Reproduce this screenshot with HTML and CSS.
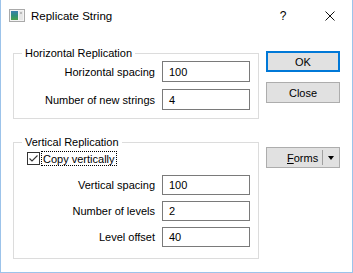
FILE: index.html
```html
<!DOCTYPE html>
<html>
<head>
<meta charset="utf-8">
<link rel="stylesheet" href="styles.css">
</head>
<body>
<div class="window">
  <div class="titlebar">
    <svg class="appicon" width="16" height="13" viewBox="0 0 16 13">
      <defs>
        <linearGradient id="pane" x1="0" y1="0" x2="0" y2="1">
          <stop offset="0" stop-color="#3a7fb0"/>
          <stop offset="0.5" stop-color="#2f8f7a"/>
          <stop offset="1" stop-color="#4aa04a"/>
        </linearGradient>
      </defs>
      <rect x="0.5" y="0.5" width="15" height="12" fill="#f4f4f4" stroke="#a9a9a9"/>
      <rect x="2" y="2" width="7" height="9" fill="url(#pane)"/>
      <rect x="10" y="2" width="4" height="9" fill="#e6e6e6"/>
      <rect x="11" y="3" width="2" height="2" fill="#b9b9b9"/>
    </svg>
    <span class="title">Replicate String</span>
    <span class="caption help">?</span>
    <span class="caption close">
      <svg width="10" height="10" viewBox="0 0 10 10"><path d="M0.5 0.5 L9.5 9.5 M9.5 0.5 L0.5 9.5" stroke="#111" stroke-width="1"/></svg>
    </span>
  </div>
  <div class="body">
    <div class="groups">
      <fieldset class="group group-h">
        <legend>Horizontal Replication</legend>
        <div class="rows rows-h">
          <span class="label">Horizontal spacing</span><span class="input">100</span>
          <span class="label">Number of new strings</span><span class="input">4</span>
        </div>
      </fieldset>
      <fieldset class="group group-v">
        <legend>Vertical Replication</legend>
        <div class="check-row">
          <svg class="checkbox" width="13" height="13" viewBox="0 0 13 13">
            <rect x="0.5" y="0.5" width="12" height="12" fill="#fff" stroke="#333"/>
            <path d="M2.5 6.5 L5 9 L10.5 3.5" fill="none" stroke="#333" stroke-width="1.1"/>
          </svg>
          <span class="check-label">Copy vertically</span>
        </div>
        <div class="rows rows-v">
          <span class="label">Vertical spacing</span><span class="input">100</span>
          <span class="label">Number of levels</span><span class="input">2</span>
          <span class="label">Level offset</span><span class="input">40</span>
        </div>
      </fieldset>
    </div>
    <div class="buttons">
      <div class="btn btn-default">OK</div>
      <div class="btn btn-close">Close</div>
      <div class="btn split">
        <span class="split-text"><u>F</u>orms</span>
        <span class="split-sep"></span>
        <span class="split-arrow"></span>
      </div>
    </div>
  </div>
</div>
</body>
</html>
```
FILE: styles.css
```css
* { box-sizing: border-box; }
html, body { margin: 0; padding: 0; background: #fff; }
body {
  font-family: "Liberation Sans", Arial, sans-serif;
  font-size: 11px;
  color: #000;
}
.window {
  width: 353px;
  height: 273px;
  background: #fff;
  border: 1px solid #9cc3ea;
  border-top: none;
  display: flex;
  flex-direction: column;
}
.titlebar {
  height: 31px;
  display: flex;
  align-items: center;
  padding-left: 8px;
}
.appicon { display: block; margin-top: 0; }
.title {
  margin-left: 6px;
  font-size: 11.5px;
  flex: 1;
}
.caption {
  width: 46px;
  height: 31px;
  display: flex;
  align-items: center;
  justify-content: center;
}
.help { font-size: 12px; padding-top: 0; }
.close svg { display: block; margin-left: 1px; }
.body {
  display: flex;
  gap: 7px;
  padding: 14px 12px 0 12px;
}
.groups {
  display: flex;
  flex-direction: column;
  width: 246px;
}
.group {
  margin: 0;
  min-width: 0;
  border: 1px solid #dcdcdc;
  padding: 0 8px 8px 8px;
}
.group legend {
  padding: 0 3px;
  line-height: 16px;
  height: 16px;
}
.rows {
  display: grid;
  grid-template-columns: 1fr 88px;
  column-gap: 7px;
  align-items: center;
}
.rows-h { row-gap: 7px; }
.rows-h .input { height: 21px; }
.rows-v { row-gap: 6px; margin-top: 8px; }
.rows-v .input { height: 20px; }
.group-v { margin-top: 15px; padding-bottom: 11px; }
.label { text-align: right; white-space: nowrap; }
.input {
  border: 1px solid #7a7a7a;
  background: #fff;
  padding-left: 6px;
  display: flex;
  align-items: center;
}
.check-row {
  height: 17px;
  display: flex;
  align-items: center;
  padding-left: 5px;
}
.checkbox { display: block; }
.check-label {
  margin-left: 1px;
  padding: 0 1px;
  height: 15px;
  line-height: 14px;
  outline: 1px dotted #000;
  outline-offset: -1px;
  border: 1px solid transparent;
}
.buttons {
  display: flex;
  flex-direction: column;
  width: 74px;
  padding-top: 6px;
}
.btn {
  height: 21px;
  background: #e1e1e1;
  border: 1px solid #adadad;
  display: flex;
  align-items: center;
  justify-content: center;
}
.btn-default { border: 2px solid #0078d7; }
.btn-close { margin-top: 10px; }
.split {
  margin-top: 44px;
  justify-content: flex-start;
  padding-left: 20px;
}
.split-text { width: 34px; }
.split-sep {
  width: 1px;
  height: 15px;
  background: #a0a0a0;
  margin-left: 1px;
}
.split-arrow {
  margin-left: 5px;
  width: 0;
  height: 0;
  border-left: 3.5px solid transparent;
  border-right: 3.5px solid transparent;
  border-top: 4px solid #000;
}
```
